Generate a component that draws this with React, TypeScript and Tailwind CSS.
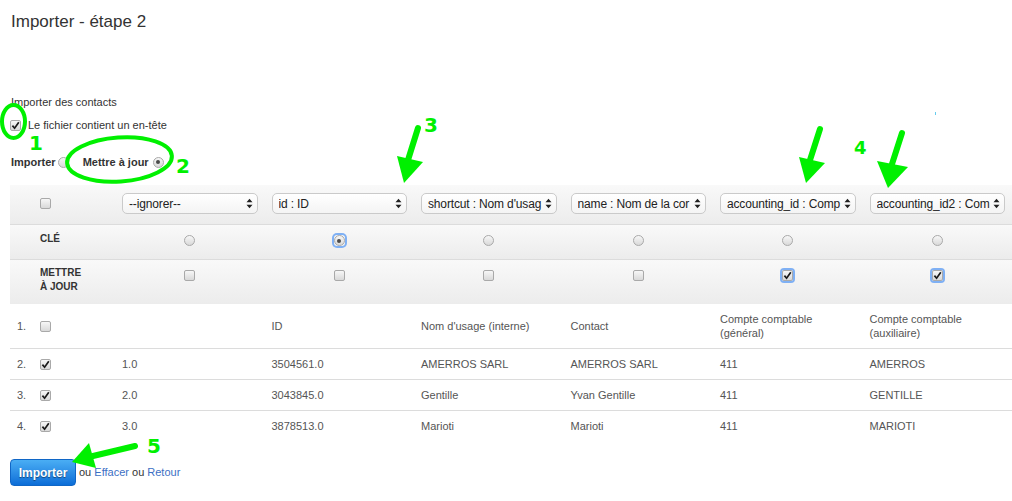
import React from "react";

function Cb({ checked, focus }: { checked?: boolean; focus?: boolean }) {
  return (
    <span
      className={`inline-flex items-center justify-center w-[11px] h-[11px] shrink-0 rounded-[2px] border border-[#a9a9a9] bg-linear-to-b from-[#f7f7f7] to-[#d9d9d9] ${
        focus ? "ring-2 ring-[#7fb0f4]" : ""
      }`}
    >
      {checked && (
        <svg width="9" height="9" viewBox="0 0 9 9">
          <path d="M1.4 4.6 L3.6 7.2 L7.8 1.2" stroke="#1a1a1a" strokeWidth="1.7" fill="none" />
        </svg>
      )}
    </span>
  );
}

function Rd({ checked, focus }: { checked?: boolean; focus?: boolean }) {
  return (
    <span
      className={`flex w-[11px] h-[11px] shrink-0 ${focus ? "rounded-[3px] ring-2 ring-[#7fb0f4]" : ""}`}
    >
      <span className="flex items-center justify-center w-[11px] h-[11px] rounded-full border border-[#a9a9a9] bg-linear-to-b from-[#f7f7f7] to-[#d9d9d9]">
        {checked && <span className="w-[4px] h-[4px] rounded-full bg-[#4a4a4a]" />}
      </span>
    </span>
  );
}

function Sel({ label }: { label: string }) {
  return (
    <div className="flex items-center h-[21px] w-full rounded-[5px] border border-[#cacaca] bg-linear-to-b from-white to-[#f4f4f4] pl-[6px] pr-[4px]">
      <span className="flex-1 min-w-0 overflow-hidden whitespace-nowrap text-[12px] tracking-[-0.15px] leading-[18px] text-[#222]">
        {label}
      </span>
      <svg width="7" height="11" viewBox="0 0 7 11" className="ml-[1px] shrink-0">
        <path d="M3.5 0.8 L6.5 4.3 L0.5 4.3 Z M3.5 10.2 L6.5 6.7 L0.5 6.7 Z" fill="#222" />
      </svg>
    </div>
  );
}

const selects = [
  "--ignorer--",
  "id : ID",
  "shortcut : Nom d'usag",
  "name : Nom de la cor",
  "accounting_id : Comp",
  "accounting_id2 : Com",
];

const rows = [
  { n: "2.", v: ["1.0", "3504561.0", "AMERROS SARL", "AMERROS SARL", "411", "AMERROS"] },
  { n: "3.", v: ["2.0", "3043845.0", "Gentille", "Yvan Gentille", "411", "GENTILLE"] },
  { n: "4.", v: ["3.0", "3878513.0", "Marioti", "Marioti", "411", "MARIOTI"] },
];

export default function App() {
  return (
    <div className="relative w-[1012px] h-[501px] overflow-hidden bg-white font-['Liberation_Sans',Arial,sans-serif] text-[11px] text-[#333]">
      <h1 className="pl-[11px] pt-[12px] text-[17px] leading-[20px] font-normal text-[#333]">
        Importer - étape 2
      </h1>

      <div className="mt-[63px] pl-[11px] leading-[14px]">Importer des contacts</div>

      <div className="mt-[8px] pl-[10px] flex items-center h-[16px] gap-[7px]">
        <Cb checked />
        <span className="leading-[14px]">Le fichier contient un en-tête</span>
      </div>

      <div className="mt-[21px] pl-[11px] flex items-center h-[16px] font-bold leading-[14px]">
        <span>Importer</span>
        <span className="ml-[2px]">
          <Rd />
        </span>
        <span className="ml-[14px]">Mettre à jour</span>
        <span className="ml-[4px]">
          <Rd checked />
        </span>
      </div>

      <div className="mt-[15px] ml-[10px]">
        <div className="grid grid-cols-[23px_82px_repeat(6,minmax(0,1fr))] h-[40px] border-b border-[#dcdcdc] bg-linear-to-b from-[#f9f9f9] to-[#ececec]">
          <div />
          <div className="pl-[7px] pt-[12px]">
            <Cb />
          </div>
          {selects.map((s) => (
            <div key={s} className="pl-[7px] pr-[7px] pt-[8px]">
              <Sel label={s} />
            </div>
          ))}
        </div>

        <div className="grid grid-cols-[23px_82px_repeat(6,minmax(0,1fr))] h-[35px] border-b border-[#dcdcdc] bg-linear-to-b from-[#f9f9f9] to-[#ececec]">
          <div />
          <div className="pl-[7px] pt-[7px] leading-[14px] text-[10px] font-bold text-[#333]">CLÉ</div>
          {[0, 1, 2, 3, 4, 5].map((i) => (
            <div key={i} className="flex justify-center pt-[10px]">
              <Rd checked={i === 1} focus={i === 1} />
            </div>
          ))}
        </div>

        <div className="grid grid-cols-[23px_82px_repeat(6,minmax(0,1fr))] h-[44px] bg-linear-to-b from-[#f9f9f9] to-[#ececec]">
          <div />
          <div className="pl-[7px] pt-[6px] leading-[14px] text-[10px] font-bold text-[#333]">
            METTRE
            <br />À JOUR
          </div>
          {[0, 1, 2, 3, 4, 5].map((i) => (
            <div key={i} className="flex justify-center pt-[10px]">
              <Cb checked={i >= 4} focus={i >= 4} />
            </div>
          ))}
        </div>

        <div className="grid grid-cols-[23px_82px_repeat(6,minmax(0,1fr))] items-center border-b border-[#dcdcdc] py-[8px] leading-[14px] text-[#555]">
          <div className="pl-[7px]">1.</div>
          <div className="pl-[7px] flex">
            <Cb />
          </div>
          <div className="pl-[7px]" />
          <div className="pl-[7px]">ID</div>
          <div className="pl-[7px]">Nom d'usage (interne)</div>
          <div className="pl-[7px]">Contact</div>
          <div className="pl-[7px]">
            Compte comptable
            <br />
            (général)
          </div>
          <div className="pl-[7px]">
            Compte comptable
            <br />
            (auxiliaire)
          </div>
        </div>

        {rows.map((r, idx) => (
          <div
            key={r.n}
            className={`grid grid-cols-[23px_82px_repeat(6,minmax(0,1fr))] items-center py-[8px] leading-[14px] text-[#555] ${
              idx < rows.length - 1 ? "border-b border-[#dcdcdc]" : ""
            }`}
          >
            <div className="pl-[7px]">{r.n}</div>
            <div className="pl-[7px] flex">
              <Cb checked />
            </div>
            {r.v.map((v, j) => (
              <div key={j} className="pl-[7px] whitespace-nowrap">
                {v}
              </div>
            ))}
          </div>
        ))}
      </div>

      <div className="mt-[18px] ml-[10px] flex items-center">
        <button className="h-[27px] w-[66px] rounded-[4px] border border-[#1066c6] bg-linear-to-b from-[#4aaef4] to-[#0b6dd7] text-[12px] font-bold text-white [text-shadow:0_1px_1px_rgba(0,0,0,0.45)]">
          Importer
        </button>
        <span className="ml-[3px] text-[#333]">
          ou <a className="text-[#3c6fc4]">Effacer</a> ou <a className="text-[#3c6fc4]">Retour</a>
        </span>
      </div>

      <svg
        className="absolute left-0 top-0 pointer-events-none"
        width="1012"
        height="501"
        viewBox="0 0 1012 501"
      >
        <g fill="none" stroke="#00f000" strokeWidth="4">
          <ellipse cx="13.5" cy="121.5" rx="11.5" ry="16.5" />
          <ellipse cx="119.5" cy="159.5" rx="52.5" ry="22" transform="rotate(-4 119.5 159.5)" />
        </g>
        <g stroke="#00f000" strokeWidth="6" strokeLinecap="round">
          <line x1="418" y1="128" x2="408" y2="160" />
          <line x1="820" y1="129" x2="810" y2="160" />
          <line x1="902" y1="133" x2="892" y2="164" />
          <line x1="135" y1="446" x2="93" y2="456" />
        </g>
        <g fill="#00f000">
          <polygon points="397,156 423,162 404,183" />
          <polygon points="799,157 825,163 806,183" />
          <polygon points="877,161 908,167 888,188" />
          <polygon points="89,443 96,468 72,462" />
          <rect x="935" y="112" width="1" height="3" fill="#66ccee" />
        </g>
        <g fill="#00f000" fontFamily="'DejaVu Sans', sans-serif" fontSize="20" fontWeight="bold">
          <text x="29" y="150">1</text>
          <text x="176" y="173">2</text>
          <text x="424" y="132">3</text>
          <text x="854" y="154" fontSize="18">4</text>
          <text x="147" y="453">5</text>
        </g>
      </svg>
    </div>
  );
}
